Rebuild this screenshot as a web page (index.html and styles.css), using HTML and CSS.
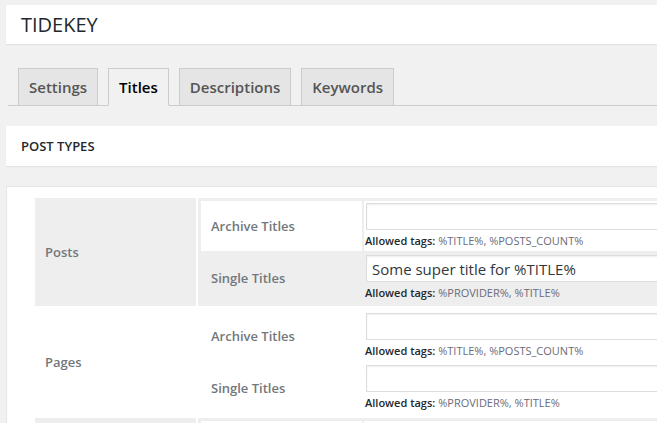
FILE: index.html
```html
<!DOCTYPE html>
<html>
<head>
<meta charset="utf-8">
<link rel="stylesheet" href="styles.css">
</head>
<body>
<div class="page">
  <div class="title-box"><h1>TIDEKEY</h1></div>
  <nav class="tabs">
    <a class="tab">Settings</a>
    <a class="tab active">Titles</a>
    <a class="tab">Descriptions</a>
    <a class="tab">Keywords</a>
  </nav>
  <div class="section-box"><h2>Post Types</h2></div>
  <div class="content-box">
    <table class="outer">
      <tr class="gray">
        <th class="type">Posts</th>
        <td class="fields">
          <table class="inner">
            <tr class="white">
              <th class="label">Archive Titles</th>
              <td class="field">
                <input class="text" type="text" value="">
                <p class="desc"><b>Allowed tags:</b> %TITLE%, %POSTS_COUNT%</p>
              </td>
            </tr>
            <tr class="gray">
              <th class="label">Single Titles</th>
              <td class="field">
                <input class="text" type="text" value="Some super title for %TITLE%">
                <p class="desc"><b>Allowed tags:</b> %PROVIDER%, %TITLE%</p>
              </td>
            </tr>
          </table>
        </td>
      </tr>
      <tr class="white">
        <th class="type">Pages</th>
        <td class="fields">
          <table class="inner">
            <tr class="white">
              <th class="label">Archive Titles</th>
              <td class="field">
                <input class="text" type="text" value="">
                <p class="desc"><b>Allowed tags:</b> %TITLE%, %POSTS_COUNT%</p>
              </td>
            </tr>
            <tr class="white">
              <th class="label">Single Titles</th>
              <td class="field">
                <input class="text" type="text" value="">
                <p class="desc"><b>Allowed tags:</b> %PROVIDER%, %TITLE%</p>
              </td>
            </tr>
          </table>
        </td>
      </tr>
      <tr class="gray">
        <th class="type">Media</th>
        <td class="fields">
          <table class="inner">
            <tr class="white">
              <th class="label">Archive Titles</th>
              <td class="field">
                <input class="text" type="text" value="">
                <p class="desc"><b>Allowed tags:</b> %TITLE%, %POSTS_COUNT%</p>
              </td>
            </tr>
          </table>
        </td>
      </tr>
    </table>
  </div>
</div>
</body>
</html>
```
FILE: styles.css
```css
html, body {
  margin: 0;
  padding: 0;
  overflow: hidden;
  background: #f1f1f1;
}
body {
  font-family: "Open Sans", "Liberation Sans", sans-serif;
  color: #444;
}
.page {
  width: 900px;
  padding: 5px 0 0 6px;
}
.title-box {
  background: #fff;
  height: 39px;
  box-shadow: 0 1px 1px rgba(0,0,0,0.06);
  display: flex;
  align-items: center;
  padding-left: 15px;
}
.title-box h1 {
  margin: 0;
  font-size: 20px;
  font-weight: 400;
  color: #23282d;
  line-height: 26px;
}
.tabs {
  display: flex;
  margin-top: 24px;
  margin-left: 2px;
  padding-left: 10px;
  border-bottom: 1px solid #ccc;
  gap: 10px;
  height: 37px;
  align-items: flex-end;
}
.tab {
  display: block;
  box-sizing: border-box;
  height: 38px;
  margin-bottom: -1px;
  padding: 6px 10px;
  font-size: 15px;
  line-height: 24px;
  font-weight: 600;
  color: #555;
  background: #e5e5e5;
  border: 1px solid #ccc;
}
.tab.active {
  background: #f1f1f1;
  color: #000;
  border-bottom-color: #f1f1f1;
}
.section-box {
  margin-top: 20px;
  background: #fff;
  height: 40px;
  box-shadow: 0 1px 1px rgba(0,0,0,0.06);
  display: flex;
  align-items: center;
  padding-left: 15px;
}
.section-box h2 {
  margin: 0;
  font-size: 13px;
  font-weight: 600;
  text-transform: uppercase;
  color: #23282d;
}
.content-box {
  margin-top: 20px;
  background: #fff;
  border: 1px solid #e5e5e5;
  padding: 9px 0 0 26px;
  height: 400px;
}
.outer {
  border-spacing: 2px;
  width: 100%;
}
.inner {
  border-spacing: 2px;
  width: 100%;
}
.outer > tbody > tr.gray > th,
.outer > tbody > tr.gray > td,
.inner tr.gray > th,
.inner tr.gray > td {
  background: #eee;
}
.outer > tbody > tr.white > th,
.outer > tbody > tr.white > td,
.inner tr.white > th,
.inner tr.white > td {
  background: #fff;
}
th.type {
  width: 151px;
  padding: 0 0 0 10px;
  text-align: left;
  font-size: 13px;
  font-weight: 600;
  color: #72777c;
  vertical-align: middle;
}
td.fields {
  padding: 1px;
}
th.label {
  width: 151px;
  min-width: 151px;
  padding: 0 0 0 10px;
  height: 50px;
  text-align: left;
  font-size: 13px;
  font-weight: 600;
  color: #72777c;
  vertical-align: middle;
}
td.field {
  padding: 2px 0 2px 2px;
  vertical-align: top;
}
.text {
  display: block;
  box-sizing: border-box;
  width: 100%;
  height: 27px;
  margin: 0;
  padding: 0 5px;
  border: 1px solid #ddd;
  box-shadow: inset 0 1px 2px rgba(0,0,0,0.07);
  background: #fff;
  font-family: "Open Sans", "Liberation Sans", sans-serif;
  font-size: 15px;
  color: #32373c;
}
.desc {
  margin: 3px 0 0 -1px;
  font-size: 11px;
  line-height: 16px;
  color: #6b6b7a;
}
.desc b {
  font-weight: 600;
  color: #23282d;
}
```
